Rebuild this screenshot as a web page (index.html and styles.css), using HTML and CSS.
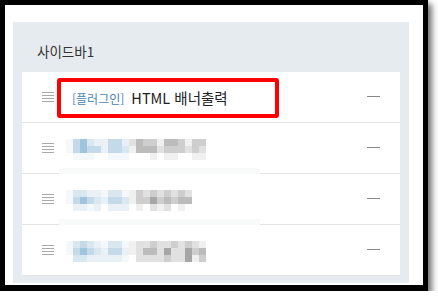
FILE: index.html
```html
<!DOCTYPE html>
<html lang="ko">

<head>
    <meta charset="UTF-8">
    <meta name="viewport" content="width=device-width, initial-scale=1.0">
    <title>사이드바</title>
    <link rel="stylesheet" href="styles.css">
</head>

<body>
    <div class="frame">
        <div class="panel">
            <h3 class="panel-title">사이드바1</h3>
            <ul class="widget-list">
                <li class="widget">
                    <span class="handle"><i></i><i></i><i></i><i></i></span>
                    <span class="name"><em class="tag">[플러그인]</em> HTML 배너출력</span>
                    <span class="minus"></span>
                    <!-- 강조 표시 -->
                    <span class="mark"></span>
                </li>
                <li class="widget">
                    <span class="handle"><i></i><i></i><i></i><i></i></span>
                    <span class="mz">
                        <i class="b5"></i><i class="b2"></i><i class="b1"></i><i class="b3"></i><i class="b4"></i><i class="b4"></i><i class="b2"></i><i class="b2"></i><i class="b4"></i><i class="g4"></i><i class="g2"></i><i class="g3"></i><i class="g3"></i><i class="g5"></i><i class="g2"></i><i class="g2"></i><i class="g3"></i><i class="g5"></i><i class="g3"></i><i class="g3"></i>
                        <i class="b5"></i><i class="b2"></i><i class="b1"></i><i class="b2"></i><i class="b2"></i><i class="b4"></i><i class="b2"></i><i class="b2"></i><i class="b3"></i><i class="g5"></i><i class="g2"></i><i class="g2"></i><i class="g2"></i><i class="g4"></i><i class="g3"></i><i class="g3"></i><i class="g3"></i><i class="g4"></i><i class="g3"></i><i class="g4"></i>
                        <i></i><i class="b5"></i><i class="b5"></i><i class="b5"></i><i></i><i></i><i class="b5"></i><i class="b5"></i><i class="b5"></i><i></i><i></i><i></i><i class="g5"></i><i></i><i class="g5"></i><i class="g5"></i><i></i><i></i><i class="g5"></i><i class="g5"></i>
                    </span>
                    <span class="minus"></span>
                    <span class="smear"></span>
                </li>
                <li class="widget">
                    <span class="handle"><i></i><i></i><i></i><i></i></span>
                    <span class="mz">
                        <i class="b5"></i><i class="b3"></i><i class="b3"></i><i class="b4"></i><i class="b4"></i><i class="b5"></i><i class="b3"></i><i class="b3"></i><i class="b5"></i><i class="g5"></i><i class="g3"></i><i class="g4"></i><i class="g3"></i><i class="g4"></i><i class="g3"></i><i class="g4"></i><i class="g3"></i><i class="g4"></i><i></i><i></i>
                        <i class="b5"></i><i class="b2"></i><i class="b1"></i><i class="b2"></i><i class="b3"></i><i class="b4"></i><i class="b2"></i><i class="b2"></i><i class="b3"></i><i class="g5"></i><i class="g3"></i><i class="g3"></i><i class="g1"></i><i class="g3"></i><i class="g2"></i><i class="g3"></i><i class="g2"></i><i class="g2"></i><i></i><i></i>
                        <i></i><i class="b4"></i><i class="b4"></i><i class="b5"></i><i class="b4"></i><i></i><i class="b4"></i><i class="b4"></i><i class="b4"></i><i></i><i class="g5"></i><i></i><i class="g4"></i><i class="g5"></i><i class="g4"></i><i></i><i class="g5"></i><i></i><i></i><i></i>
                    </span>
                    <span class="minus"></span>
                    <span class="smear"></span>
                </li>
                <li class="widget">
                    <span class="handle"><i></i><i></i><i></i><i></i></span>
                    <span class="mz">
                        <i class="b5"></i><i class="b3"></i><i class="b2"></i><i class="b3"></i><i class="b4"></i><i class="b5"></i><i class="b3"></i><i class="b3"></i><i class="b5"></i><i class="g5"></i><i class="g4"></i><i class="g4"></i><i class="g3"></i><i class="g4"></i><i class="g4"></i><i class="g3"></i><i class="g4"></i><i class="g3"></i><i class="g4"></i><i class="g5"></i>
                        <i class="b5"></i><i class="b2"></i><i class="b1"></i><i class="b2"></i><i class="b3"></i><i class="b4"></i><i class="b2"></i><i class="b2"></i><i class="b4"></i><i class="g5"></i><i class="g4"></i><i class="g2"></i><i class="g2"></i><i class="g4"></i><i class="g1"></i><i class="g4"></i><i class="g4"></i><i class="g1"></i><i class="g3"></i><i class="g2"></i>
                        <i></i><i class="b3"></i><i class="b3"></i><i class="b4"></i><i class="b4"></i><i class="b4"></i><i class="b4"></i><i class="b4"></i><i class="b5"></i><i></i><i class="g4"></i><i class="g4"></i><i class="g4"></i><i class="g4"></i><i class="g3"></i><i class="g4"></i><i class="g4"></i><i class="g1"></i><i class="g5"></i><i class="g3"></i>
                    </span>
                    <span class="minus"></span>
                </li>
            </ul>
        </div>
    </div>
</body>

</html>
```

FILE: styles.css
```css
body {
    margin: 0;
    background: #fff;
    font-family: "Noto Sans CJK KR", "Noto Sans", sans-serif;
}

.frame {
    width: 428px;
    height: 291px;
    box-sizing: border-box;
    border: 5px solid #000;
    border-bottom-width: 6px;
    background: #fff;
    box-shadow: 4px 4px 6px rgba(0, 0, 0, 0.55);
    padding: 17px 0 0 8px;
}

.panel {
    width: 396px;
    height: 261px;
    box-sizing: border-box;
    background: #e6ebf0;
    padding: 0 9px 7px;
}

.panel-title {
    margin: 0;
    height: 50px;
    box-sizing: border-box;
    padding: 19px 0 0 15px;
    line-height: 20px;
    font-size: 13.5px;
    font-weight: 400;
    color: #333;
}

.widget-list {
    margin: 0;
    padding: 0;
    list-style: none;
    background: #fff;
}

.widget {
    position: relative;
    display: flex;
    align-items: center;
    height: 51px;
    box-sizing: border-box;
    padding: 0 20px;
    border-bottom: 1px solid #e2e4e6;
}

.handle {
    display: flex;
    flex-direction: column;
    gap: 2px;
    width: 12px;
    flex: none;
}

.handle i {
    display: block;
    height: 1px;
    background: #a9a9a9;
}

.name {
    margin-left: 18px;
    font-size: 14.5px;
    color: #222;
    white-space: nowrap;
}

.tag {
    font-style: normal;
    font-size: 12px;
    color: #4a85b5;
    margin-right: 3px;
}

.minus {
    margin-left: auto;
    width: 13px;
    height: 1px;
    border-top: 1px solid #888;
}

/* 빨간 강조 박스 */
.mark {
    position: absolute;
    left: 35px;
    top: 6px;
    width: 222px;
    height: 40px;
    box-sizing: border-box;
    border: 4px solid #f00;
    border-radius: 3px;
}

/* 모자이크 처리 */
.mz {
    display: grid;
    grid-template-columns: repeat(20, 7px);
    grid-auto-rows: 7px;
    margin: 2px 0 0 12px;
}

.mz i {
    display: block;
}

.smear {
    position: absolute;
    left: 37px;
    bottom: -1px;
    width: 201px;
    height: 6px;
    background: #f8f9f9;
}

.b1 { background: #9fc5dd; }
.b2 { background: #c4dae9; }
.b3 { background: #d9e7f1; }
.b4 { background: #e9f1f7; }
.b5 { background: #f4f8fb; }
.g1 { background: #a6a6a6; }
.g2 { background: #bcbcbc; }
.g3 { background: #cecece; }
.g4 { background: #e1e1e1; }
.g5 { background: #f0f0f0; }
```
